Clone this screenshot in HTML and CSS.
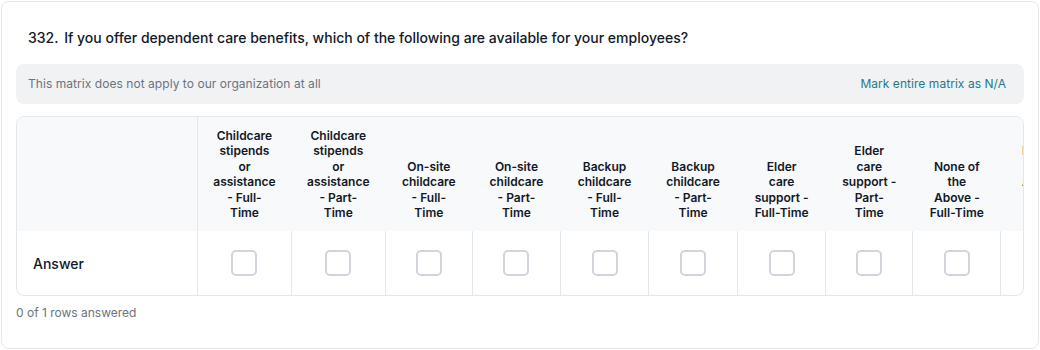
FILE: index.html
```html
<!DOCTYPE html>
<html lang="en">
<head>
    <meta charset="UTF-8">
    <meta name="viewport" content="width=device-width, initial-scale=1.0">
    <title>Question 332</title>
    <link rel="stylesheet" href="styles.css">
</head>
<body>

    <div class="card">
        <!-- Question title -->
        <div class="question">
            <span class="number">332.</span>
            <span>If you offer dependent care benefits, which of the following are available for your employees?</span>
        </div>

        <!-- N/A bar -->
        <div class="na-bar">
            <span>This matrix does not apply to our organization at all</span>
            <a href="#" class="na-link">Mark entire matrix as N/A</a>
        </div>

        <!-- Matrix -->
        <div class="matrix">
            <table>
                <colgroup>
                    <col style="width: 180px">
                    <col style="width: 94px">
                    <col style="width: 94px">
                    <col style="width: 87px">
                    <col style="width: 88px">
                    <col style="width: 88px">
                    <col style="width: 89px">
                    <col style="width: 88px">
                    <col style="width: 87px">
                    <col style="width: 88px">
                    <col style="width: 88px">
                </colgroup>
                <thead>
                    <tr>
                        <th class="row-head"></th>
                        <th>Childcare<br>stipends<br>or<br>assistance<br>- Full-<br>Time</th>
                        <th>Childcare<br>stipends<br>or<br>assistance<br>- Part-<br>Time</th>
                        <th>On-site<br>childcare<br>- Full-<br>Time</th>
                        <th>On-site<br>childcare<br>- Part-<br>Time</th>
                        <th>Backup<br>childcare<br>- Full-<br>Time</th>
                        <th>Backup<br>childcare<br>- Part-<br>Time</th>
                        <th>Elder<br>care<br>support -<br>Full-Time</th>
                        <th>Elder<br>care<br>support -<br>Part-<br>Time</th>
                        <th>None of<br>the<br>Above -<br>Full-Time</th>
                        <th>None of<br>the<br>Above -<br>Part-<br>Time</th>
                    </tr>
                </thead>
                <tbody>
                    <tr>
                        <td class="row-label">Answer</td>
                        <td><input type="checkbox"></td>
                        <td><input type="checkbox"></td>
                        <td><input type="checkbox"></td>
                        <td><input type="checkbox"></td>
                        <td><input type="checkbox"></td>
                        <td><input type="checkbox"></td>
                        <td><input type="checkbox"></td>
                        <td><input type="checkbox"></td>
                        <td><input type="checkbox"></td>
                        <td><input type="checkbox"></td>
                    </tr>
                </tbody>
            </table>
        </div>

        <div class="progress">0 of 1 rows answered</div>
    </div>

</body>
</html>
```

FILE: styles.css
```css
/* Basic reset */
* {
    margin: 0;
    padding: 0;
    box-sizing: border-box;
}

body {
    font-family: Inter, "Noto Sans", sans-serif;
    background-color: #fff;
    color: #111827;
}

/* Card */
.card {
    width: 1038px;
    height: 348px;
    margin: 1px;
    padding: 14px;
    border: 1px solid #e5e7eb;
    border-radius: 8px;
    background-color: #fff;
}

.question {
    padding: 12px 12px 16px;
    font-size: 14px;
    line-height: 20px;
    font-weight: 500;
    color: #111827;
}

.question .number {
    margin-right: 2px;
}

/* N/A bar */
.na-bar {
    display: flex;
    justify-content: space-between;
    align-items: center;
    height: 40px;
    padding: 0 18px 0 12px;
    background-color: #f1f2f4;
    border-radius: 8px;
    font-size: 12px;
    line-height: 16px;
    letter-spacing: 0.05px;
    color: #6b7280;
}

.na-link {
    color: #1f7a84;
    text-decoration: none;
}

/* Matrix table */
.matrix {
    margin-top: 12px;
    border: 1px solid #e5e7eb;
    border-radius: 8px;
    overflow: hidden;
}

table {
    border-collapse: collapse;
    table-layout: fixed;
    width: 1072px;
}

th {
    padding: 11px 8px;
    background-color: #f8f9fb;
    font-size: 12px;
    line-height: 15.4px;
    font-weight: 600;
    color: #111827;
    text-align: center;
    vertical-align: bottom;
    white-space: nowrap;
}

th.row-head {
    border-right: 1px solid #e5e7eb;
}

td {
    height: 64px;
    border-left: 1px solid #e5e7eb;
    text-align: center;
    vertical-align: middle;
}

td.row-label {
    border-left: none;
    padding-left: 16px;
    text-align: left;
    font-size: 14px;
    font-weight: 500;
    color: #111827;
}

input[type="checkbox"] {
    appearance: none;
    display: block;
    width: 26px;
    height: 26px;
    margin: 0 auto;
    border: 2px solid #d1d5db;
    border-radius: 5px;
    background-color: #fff;
    cursor: pointer;
}

.progress {
    margin-top: 9px;
    font-size: 12px;
    line-height: 16px;
    color: #6b7280;
}
```
